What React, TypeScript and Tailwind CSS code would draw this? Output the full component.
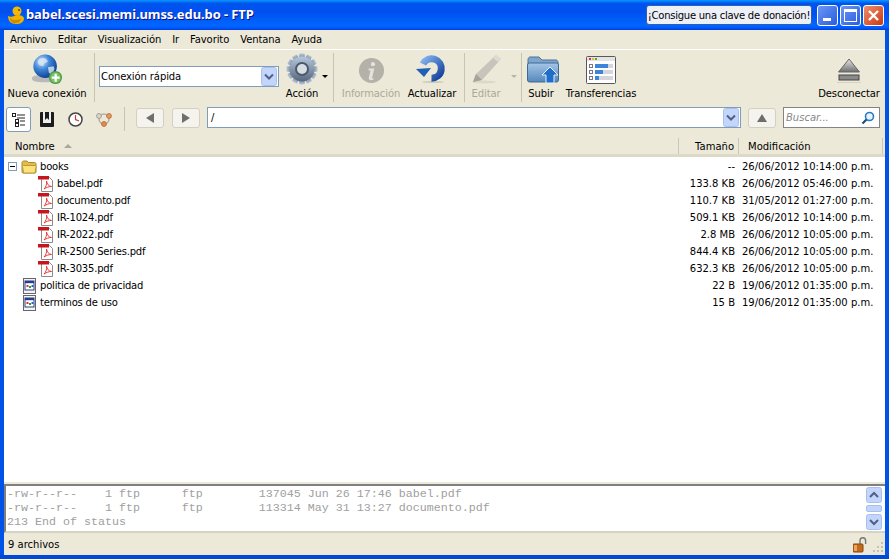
import type { ReactNode } from "react";

const FONT = "font-['DejaVu_Sans','Noto_Sans',sans-serif]";

const MENU = ["Archivo", "Editar", "Visualización", "Ir", "Favorito", "Ventana", "Ayuda"];

type FileRow = { name: string; size: string; date: string; kind: "folder" | "pdf" | "text" };

const ROWS: FileRow[] = [
  { name: "books", size: "--", date: "26/06/2012 10:14:00 p.m.", kind: "folder" },
  { name: "babel.pdf", size: "133.8 KB", date: "26/06/2012 05:46:00 p.m.", kind: "pdf" },
  { name: "documento.pdf", size: "110.7 KB", date: "31/05/2012 01:27:00 p.m.", kind: "pdf" },
  { name: "IR-1024.pdf", size: "509.1 KB", date: "26/06/2012 10:14:00 p.m.", kind: "pdf" },
  { name: "IR-2022.pdf", size: "2.8 MB", date: "26/06/2012 10:05:00 p.m.", kind: "pdf" },
  { name: "IR-2500 Series.pdf", size: "844.4 KB", date: "26/06/2012 10:05:00 p.m.", kind: "pdf" },
  { name: "IR-3035.pdf", size: "632.3 KB", date: "26/06/2012 10:05:00 p.m.", kind: "pdf" },
  { name: "politica de privacidad", size: "22 B", date: "19/06/2012 01:35:00 p.m.", kind: "text" },
  { name: "terminos de uso", size: "15 B", date: "19/06/2012 01:35:00 p.m.", kind: "text" },
];

const LOG = [
  "-rw-r--r--    1 ftp      ftp        137045 Jun 26 17:46 babel.pdf",
  "-rw-r--r--    1 ftp      ftp        113314 May 31 13:27 documento.pdf",
  "213 End of status",
];

function Duck() {
  return (
    <svg width="18" height="20" viewBox="0 0 18 20">
      <circle cx="10" cy="6" r="4.5" fill="#f5b800" />
      <path d="M1 11c2 1 4 1 6 0 3-2 9-1 10 2 0 4-3 6-8 6-5 0-8-3-8-8z" fill="#f2b100" />
      <path d="M3 13c2 2 6 3 11 1-1 3-3 4-6 4-3 0-5-2-5-5z" fill="#c98a00" />
      <circle cx="12" cy="5" r="1" fill="#6b4a00" />
    </svg>
  );
}

function Globe() {
  return (
    <svg width="32" height="32" viewBox="0 0 34 34">
      <defs>
        <radialGradient id="globeFill" cx="35%" cy="30%" r="75%">
          <stop offset="0%" stopColor="#cfe4fb" />
          <stop offset="45%" stopColor="#3f86d8" />
          <stop offset="100%" stopColor="#0b3c8e" />
        </radialGradient>
      </defs>
      <path d="M1 25c2-4 26-4 28 0 1 4-4 5-14 5S0 29 1 25z" fill="#b9b9b9" />
      <circle cx="15" cy="13" r="12.5" fill="url(#globeFill)" />
      <path d="M8 6c3-2 6-2 8-1l2 3-4 2-1 3-4-1-2-3zM18 14l6-1 1 3-3 6-3-2z" fill="#dbe8f4" opacity="0.8" />
      <circle cx="26" cy="25" r="7" fill="#4f9d45" />
      <circle cx="26" cy="25" r="5.6" fill="#78bf66" />
      <path d="M25 21h2.4v3h3v2.4h-3v3H25v-3h-3V24h3z" fill="#fff" />
    </svg>
  );
}

function Gear() {
  const teeth = Array.from({ length: 12 }, (_, i) => i * 30);
  return (
    <svg width="32" height="32" viewBox="0 0 32 32">
      <defs>
        <linearGradient id="gearFill" x1="0" y1="0" x2="0" y2="1">
          <stop offset="0%" stopColor="#b8c8dc" />
          <stop offset="100%" stopColor="#56667c" />
        </linearGradient>
      </defs>
      {teeth.map((deg) => (
        <rect key={deg} x="13.2" y="0.5" width="5.6" height="7" rx="1" fill="url(#gearFill)" transform={`rotate(${deg} 16 16)`} />
      ))}
      <circle cx="16" cy="16" r="12.5" fill="url(#gearFill)" />
      <circle cx="16" cy="16" r="7" fill="#4a596e" />
      <circle cx="16" cy="16" r="5" fill="#d8dde2" />
    </svg>
  );
}

function InfoIcon() {
  return (
    <svg width="27" height="27" viewBox="0 0 28 28">
      <circle cx="14" cy="14" r="13" fill="#b3b1a8" />
      <circle cx="15.5" cy="7.5" r="2.2" fill="#e4e2da" />
      <path d="M11 12h6l-2.4 9.5c-.2.8.5 1 1.9.5l-.3 1.4c-3 1.2-5.6.7-5-1.9l1.8-7.5H11z" fill="#e4e2da" />
    </svg>
  );
}

function Refresh() {
  return (
    <svg width="32" height="30" viewBox="0 0 32 30">
      <defs>
        <linearGradient id="refreshFill" x1="0" y1="0" x2="1" y2="1">
          <stop offset="0%" stopColor="#7fb2ee" />
          <stop offset="100%" stopColor="#123f9a" />
        </linearGradient>
      </defs>
      <ellipse cx="17" cy="29" rx="11" ry="1" fill="#cfccba" />
      <path d="M15.5 25.2A9.7 9.7 0 1 0 7 11" fill="none" stroke="url(#refreshFill)" strokeWidth="7" />
      <path d="M0 16l15-1-7 9z" fill="#1f5fb8" />
    </svg>
  );
}

function Pencil() {
  return (
    <svg width="32" height="30" viewBox="0 0 32 30">
      <ellipse cx="14" cy="28" rx="12" ry="1.5" fill="#dcd9c8" />
      <path d="M26 1l5 4-19 21-9 2 3-8z" fill="#c7c5bb" />
      <path d="M26 1l5 4-3 3-5-4z" fill="#dddbd1" />
      <path d="M6 20l6 6-9 2z" fill="#a5a39a" />
    </svg>
  );
}

function UploadFolder() {
  return (
    <svg width="32" height="28" viewBox="0 0 32 28">
      <defs>
        <linearGradient id="upFolder" x1="0" y1="0" x2="0" y2="1">
          <stop offset="0%" stopColor="#a5c6e6" />
          <stop offset="100%" stopColor="#5588bb" />
        </linearGradient>
      </defs>
      <path d="M1 4c0-2 1-3 2-3h9l3 3h14c1 0 2 1 2 2v4H1z" fill="#7ea6cc" stroke="#4b7199" />
      <rect x="0.5" y="7" width="31" height="19" rx="2" fill="url(#upFolder)" stroke="#3f6a96" />
      <path d="M23 11l8 8h-4v8h-8v-8h-4z" fill="#1f6fc8" stroke="#e6f0fa" />
    </svg>
  );
}

function TransferWindow() {
  const bars = [18, 13, 9];
  return (
    <svg width="30" height="28" viewBox="0 0 30 28">
      <rect x="0.5" y="0.5" width="29" height="27" rx="1" fill="#fff" stroke="#55585f" />
      <rect x="1" y="1" width="28" height="4" fill="#e4e4e4" />
      <rect x="3" y="2" width="2" height="2" fill="#d33" />
      <rect x="6" y="2" width="2" height="2" fill="#db3" />
      <rect x="9" y="2" width="2" height="2" fill="#5a3" />
      {bars.map((w, i) => (
        <g key={i}>
          <rect x="3.5" y={8.5 + i * 6} width="3" height="3" fill="#fff" stroke="#778" />
          <rect x="9" y={8 + i * 6} width="18" height="4" fill="#d4d6dc" />
          <rect x="9" y={8 + i * 6} width={w - 5} height="4" fill="#3d85d8" />
        </g>
      ))}
    </svg>
  );
}

function Eject() {
  return (
    <svg width="24" height="26" viewBox="0 0 24 26">
      <defs>
        <linearGradient id="ejectFill" x1="0" y1="0" x2="0" y2="1">
          <stop offset="0%" stopColor="#e8e8e8" />
          <stop offset="100%" stopColor="#6d6d6d" />
        </linearGradient>
      </defs>
      <path d="M12 1l10.5 13h-21z" fill="url(#ejectFill)" stroke="#666" />
      <rect x="2" y="17" width="20" height="5" fill="#8a8a8a" stroke="#444" />
      <rect x="0" y="24" width="24" height="1" fill="#d6d3c2" />
    </svg>
  );
}

function ChevronBox() {
  return (
    <svg width="16" height="19" viewBox="0 0 16 19">
      <rect x="0.5" y="0.5" width="15" height="18" rx="2" fill="#c3d5fb" stroke="#a8c0ee" />
      <path d="M4 7.5l4 4 4-4" fill="none" stroke="#4d6185" strokeWidth="2" />
    </svg>
  );
}

function NavButton({ children, className }: { children: ReactNode; className: string }) {
  return (
    <div className={`flex h-[20px] w-[28px] shrink-0 items-center justify-center rounded-[3px] border border-[#d4d0bf] bg-[#f4f3ee] ${className}`}>
      {children}
    </div>
  );
}

function FolderYellow() {
  return (
    <svg width="16" height="14" viewBox="0 0 16 14">
      <path d="M1 3c0-1 .6-2 1.5-2h3.5l1.5 1.5h6c.9 0 1.5.6 1.5 1.5v8c0 .6-.4 1-1 1H2c-.6 0-1-.4-1-1z" fill="#e6bc3c" stroke="#a58a3a" />
      <path d="M1.5 6.5c0-.6.4-1 1-1h12c.6 0 .8.4.6 1l-1.1 6.5H2.5z" fill="#fde27c" stroke="#b59a45" />
    </svg>
  );
}

function PdfIcon() {
  return (
    <svg width="16" height="16" viewBox="0 0 16 16">
      <path d="M3.5 1.5h8l3 3v11h-11z" fill="#fff" stroke="#8a8a8a" />
      <rect x="0" y="0" width="11" height="3.5" fill="#c8141c" />
      <path d="M6 13c2-2 3-5 2.5-8 .5 3 2 5 5 5.5-3 0-5 1-7.5 2.5z" fill="none" stroke="#e43a3a" strokeWidth="1" />
    </svg>
  );
}

function TextIcon() {
  return (
    <svg width="15" height="16" viewBox="0 0 15 16">
      <rect x="1.5" y="0.5" width="12" height="15" fill="#f4f4f4" stroke="#666" />
      <rect x="3" y="3" width="9" height="9" fill="#fff" stroke="#2a3d8a" />
      <rect x="3" y="3" width="9" height="2.2" fill="#2a3d8a" />
      <rect x="4.5" y="7" width="2" height="2" fill="#e03030" />
      <rect x="7" y="8" width="2" height="2" fill="#2f9a35" />
      <rect x="9.5" y="7" width="2" height="2" fill="#2a5fd8" />
    </svg>
  );
}

function Row({ row }: { row: FileRow }) {
  return (
    <div className="flex h-[17px] items-center text-[10px] text-black">
      <div className="flex min-w-0 flex-1 items-center tracking-[-0.2px]">
        {row.kind === "folder" && (
          <>
            <div className="ml-[4px] flex h-[9px] w-[9px] items-center justify-center border border-[#7f9db9] bg-white">
              <div className="h-px w-[5px] bg-black" />
            </div>
            <div className="ml-[4px]">
              <FolderYellow />
            </div>
            <span className="ml-[3px]">{row.name}</span>
          </>
        )}
        {row.kind === "pdf" && (
          <>
            <div className="ml-[34px]">
              <PdfIcon />
            </div>
            <span className="ml-[3px]">{row.name}</span>
          </>
        )}
        {row.kind === "text" && (
          <>
            <div className="ml-[18px]">
              <TextIcon />
            </div>
            <span className="ml-[3px]">{row.name}</span>
          </>
        )}
      </div>
      <div className="w-[70px] text-right">{row.size}</div>
      <div className="ml-[7px] w-[143px] whitespace-nowrap">{row.date}</div>
    </div>
  );
}

export default function App() {
  return (
    <div className={`${FONT} flex h-[559px] w-[889px] flex-col overflow-hidden bg-[#0053e6]`}>
      {/* Title bar */}
      <div className="flex h-[30px] shrink-0 items-center bg-[linear-gradient(180deg,#0997ff_0%,#0053ee_12%,#0050ee_40%,#0066ff_85%,#005bff_92%,#003dd7_100%)] pl-[7px] pr-[5px]">
        <Duck />
        <span className="ml-[1px] font-['Noto_Sans',sans-serif] text-[13px] font-bold tracking-[-0.1px] text-white [text-shadow:1px_1px_#0f1089]">
          babel.scesi.memi.umss.edu.bo - FTP
        </span>
        <div className="ml-auto flex items-center gap-[2px]">
          <div className="mr-[3px] flex h-[20px] w-[166px] items-center justify-center whitespace-nowrap rounded-[3px] border border-[#2f5fb0] bg-[#eef0f8] text-[10px] tracking-[-0.25px] text-black">
            ¡Consigue una clave de donación!
          </div>
          <div className="flex h-[21px] w-[21px] items-end justify-start rounded-[3px] border border-white bg-[linear-gradient(135deg,#6d97f3,#2a5ce0)] pb-[4px] pl-[5px]">
            <div className="h-[3px] w-[8px] bg-white" />
          </div>
          <div className="flex h-[21px] w-[21px] items-center justify-center rounded-[3px] border border-white bg-[linear-gradient(135deg,#6d97f3,#2a5ce0)]">
            <div className="h-[13px] w-[13px] border border-t-[3px] border-white" />
          </div>
          <div className="flex h-[21px] w-[21px] items-center justify-center rounded-[3px] border border-white bg-[linear-gradient(135deg,#ee8f6c,#c93a12)]">
            <svg width="13" height="13" viewBox="0 0 13 13">
              <path d="M2 2l9 9M11 2l-9 9" stroke="#fff" strokeWidth="2.4" />
            </svg>
          </div>
        </div>
      </div>

      <div className="mx-[4px] flex min-h-0 flex-1 flex-col bg-[#ece9d8] text-black">
        {/* Menu */}
        <div className="flex h-[19px] shrink-0 items-center gap-[11px] pl-[6px] text-[10px] tracking-[-0.1px]">
          {MENU.map((item) => (
            <span key={item}>{item}</span>
          ))}
        </div>
        <div className="h-px shrink-0 bg-white" />

        {/* Main toolbar */}
        <div className="flex h-[53px] shrink-0 items-stretch pt-[2px] text-[10px] tracking-[-0.1px]">
          <div className="flex w-[86px] flex-col items-center">
            <div className="mt-[2px] h-[32px]">
              <Globe />
            </div>
            <span className="whitespace-nowrap">Nueva conexión</span>
          </div>
          <div className="my-[1px] ml-[4px] w-px bg-[#c7c4b3]" />
          <div className="ml-[4px] mt-[14px] flex h-[21px] w-[180px] items-center justify-between border border-[#7f9db9] bg-white pl-px pr-[1px]">
            <span>Conexión rápida</span>
            <ChevronBox />
          </div>
          <div className="ml-[6px] flex w-[34px] flex-col items-center">
            <div className="mt-px h-[32px]">
              <Gear />
            </div>
            <span className="mt-[1px]">Acción</span>
          </div>
          <div className="ml-[3px] mt-[23px] h-0 w-0 border-x-[3px] border-t-[3px] border-x-transparent border-t-black" />
          <div className="my-[1px] ml-[5px] w-px bg-[#c7c4b3]" />
          <div className="ml-[7px] flex w-[60px] flex-col items-center text-[#aca899]">
            <div className="mt-[5px] h-[27px]">
              <InfoIcon />
            </div>
            <span className="mt-[2px]">Información</span>
          </div>
          <div className="flex w-[62px] flex-col items-center">
            <div className="mt-[1px] h-[30px]">
              <Refresh />
            </div>
            <span className="mt-[3px]">Actualizar</span>
          </div>
          <div className="my-[1px] ml-px w-px bg-[#c7c4b3]" />
          <div className="ml-[3px] flex w-[36px] flex-col items-center text-[#aca899]">
            <div className="mt-[2px] h-[30px]">
              <Pencil />
            </div>
            <span className="mt-[2px]">Editar</span>
          </div>
          <div className="ml-[7px] mt-[23px] h-0 w-0 border-x-[3px] border-t-[3px] border-x-transparent border-t-[#b8b5a6]" />
          <div className="my-[1px] ml-[4px] w-px bg-[#c7c4b3]" />
          <div className="ml-[2px] flex w-[34px] flex-col items-center">
            <div className="ml-[4px] mt-[4px] h-[28px]">
              <UploadFolder />
            </div>
            <span className="mt-[2px]">Subir</span>
          </div>
          <div className="ml-[7px] flex w-[72px] flex-col items-center">
            <div className="mt-[4px] h-[28px]">
              <TransferWindow />
            </div>
            <span className="mt-[2px] whitespace-nowrap">Transferencias</span>
          </div>
          <div className="ml-auto mr-[4px] flex w-[64px] flex-col items-center">
            <div className="mt-[6px] h-[26px]">
              <Eject />
            </div>
            <span className="mt-[2px]">Desconectar</span>
          </div>
        </div>

        {/* Browser toolbar */}
        <div className="flex h-[32px] shrink-0 items-start pt-[4px]">
          <div className="ml-[2px] flex h-[25px] w-[25px] items-center justify-center rounded-[3px] border border-[#7f9db9] bg-white">
            <svg width="14" height="14" viewBox="0 0 14 14">
              <rect x="0.5" y="0.5" width="3" height="3" fill="#fff" stroke="#222" />
              <path d="M5 2h8M5 5h8" stroke="#222" />
              <rect x="3.5" y="6.5" width="3" height="3" fill="#fff" stroke="#222" />
              <path d="M8 8h5M8 12h5" stroke="#222" />
              <rect x="3.5" y="10.5" width="3" height="3" fill="#fff" stroke="#222" />
            </svg>
          </div>
          <div className="ml-[9px] mt-[5px]">
            <svg width="14" height="15" viewBox="0 0 14 15">
              <rect x="0" y="0" width="14" height="15" rx="1" fill="#1c1c1c" />
              <rect x="3" y="0" width="8" height="11" fill="#eee" />
              <path d="M5 0h4v8l-2-2-2 2z" fill="#1c1c1c" />
            </svg>
          </div>
          <div className="ml-[14px] mt-[5px]">
            <svg width="15" height="15" viewBox="0 0 15 15">
              <circle cx="7.5" cy="7.5" r="6.5" fill="#fff" stroke="#444" strokeWidth="1.5" />
              <path d="M7.5 3v4.5l3.5 1.5" fill="none" stroke="#c04030" strokeWidth="1.2" />
            </svg>
          </div>
          <div className="ml-[13px] mt-[5px]">
            <svg width="16" height="15" viewBox="0 0 16 15">
              <circle cx="8" cy="7" r="5" fill="none" stroke="#b5b2a5" strokeWidth="1.5" />
              <circle cx="3" cy="4" r="2.4" fill="#dcd9cc" stroke="#a09d90" />
              <circle cx="13" cy="4" r="2.4" fill="#e89a60" stroke="#c0703a" />
              <circle cx="8" cy="12" r="2.4" fill="#e8884a" stroke="#c0703a" />
            </svg>
          </div>
          <div className="ml-[12px] h-[24px] w-px bg-[#c7c4b3]" />
          <NavButton className="ml-[11px] mt-[1px]">
            <div className="h-0 w-0 border-y-[5px] border-r-[8px] border-y-transparent border-r-[#6f6e68]" />
          </NavButton>
          <NavButton className="ml-[8px] mt-[1px]">
            <div className="h-0 w-0 border-y-[5px] border-l-[8px] border-y-transparent border-l-[#6f6e68]" />
          </NavButton>
          <div className="ml-[7px] flex h-[21px] w-[534px] items-center justify-between border border-[#7f9db9] bg-white pl-[3px] pr-[1px] text-[10px]">
            <span>/</span>
            <ChevronBox />
          </div>
          <NavButton className="ml-[7px] mt-[1px]">
            <div className="h-0 w-0 border-x-[5px] border-b-[8px] border-x-transparent border-b-[#6f6e68]" />
          </NavButton>
          <div className="ml-[7px] flex h-[21px] w-[97px] items-center justify-between border border-[#848484] bg-white pl-[2px] pr-[4px] text-[10px] italic text-[#888]">
            <span>Buscar...</span>
            <svg width="14" height="14" viewBox="0 0 14 14">
              <circle cx="8.5" cy="5.5" r="4" fill="#e8f2fb" stroke="#2a7ac0" strokeWidth="1.6" />
              <path d="M5.5 8.5L1.5 12.5" stroke="#14507f" strokeWidth="2.2" />
            </svg>
          </div>
        </div>

        {/* Column headers */}
        <div className="flex h-[22px] shrink-0 items-center border-b-[3px] border-[#dcd9c8] pt-[3px] text-[10px]">
          <div className="flex flex-1 items-center pl-[11px]">
            <span>Nombre</span>
            <div className="ml-[9px] h-0 w-0 border-x-[4px] border-b-[4px] border-x-transparent border-b-[#aca899]" />
          </div>
          <div className="h-[16px] w-px bg-[#cbc7b8]" />
          <div className="w-[59px] pr-[4px] text-right">Tamaño</div>
          <div className="h-[16px] w-px bg-[#cbc7b8]" />
          <div className="w-[143px] pl-[9px]">Modificación</div>
          <div className="h-[16px] w-px bg-[#cbc7b8]" />
          <div className="w-[2px]" />
        </div>

        {/* File list */}
        <div className="min-h-0 flex-1 bg-white pt-px">
          {ROWS.map((row) => (
            <Row key={row.name} row={row} />
          ))}
        </div>

        {/* Transcript */}
        <div className="h-[2px] shrink-0" />
        <div className="flex h-[49px] shrink-0 border-b-[2px] border-l-[2px] border-t-[2px] border-b-[#d6d3c4] border-l-[#808080] border-t-[#808080] bg-white pr-[3px]">
          <div className="min-w-0 flex-1 whitespace-pre pl-px pt-[1px] font-['Liberation_Mono',monospace] text-[11.67px] leading-[14px] text-[#a0a0a0]">
            {LOG.map((line) => (
              <div key={line}>{line}</div>
            ))}
          </div>
          <div className="flex w-[16px] shrink-0 flex-col justify-between py-px">
            <svg width="16" height="16" viewBox="0 0 16 16">
              <rect x="0.5" y="0.5" width="15" height="15" rx="2" fill="#c3d5fb" stroke="#a8c0ee" />
              <path d="M4 10l4-4 4 4" fill="none" stroke="#4d6185" strokeWidth="2" />
            </svg>
            <div className="h-[7px] rounded-[2px] border border-[#a8c0ee] bg-[#c3d5fb]" />
            <svg width="16" height="16" viewBox="0 0 16 16">
              <rect x="0.5" y="0.5" width="15" height="15" rx="2" fill="#c3d5fb" stroke="#a8c0ee" />
              <path d="M4 6l4 4 4-4" fill="none" stroke="#4d6185" strokeWidth="2" />
            </svg>
          </div>
        </div>

        {/* Status bar */}
        <div className="flex h-[22px] shrink-0 items-center pl-[4px] pr-[1px] pt-px text-[10px]">
          <span>9 archivos</span>
          <div className="ml-auto flex items-end gap-[5px]">
            <svg width="14" height="16" viewBox="0 0 14 16">
              <path d="M7 7V3.5a2.8 2.8 0 0 1 5.6 0V7" fill="none" stroke="#777" strokeWidth="1.4" />
              <rect x="0" y="7" width="10" height="8" rx="1" fill="#c46a1e" stroke="#85440f" />
              <rect x="1" y="8" width="3" height="6" fill="#eda45a" />
            </svg>
            <svg width="12" height="12" viewBox="0 0 12 12">
              <path d="M9 1h2v2H9zM5 5h2v2H5zM9 5h2v2H9zM1 9h2v2H1zM5 9h2v2H5zM9 9h2v2H9z" fill="#c5c2b2" />
            </svg>
          </div>
        </div>
      </div>
      <div className="h-[4px] shrink-0 bg-[#0048d8]" />
    </div>
  );
}
